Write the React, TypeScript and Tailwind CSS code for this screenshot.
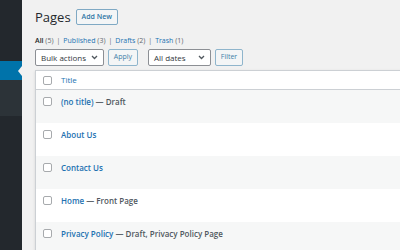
import { ReactNode } from "react";

const rows: { title: string; state?: string }[] = [
  { title: "(no title)", state: "Draft" },
  { title: "About Us" },
  { title: "Contact Us" },
  { title: "Home", state: "Front Page" },
  { title: "Privacy Policy", state: "Draft, Privacy Policy Page" },
];

function Checkbox() {
  return <span className="block w-[9px] h-[9px] rounded-[2px] border border-[#a7aaad] bg-white shrink-0" />;
}

function Chevron() {
  return (
    <svg width="7" height="5" viewBox="0 0 7 5" className="shrink-0">
      <path d="M1 1l2.5 2.5L6 1" fill="none" stroke="#50575e" strokeWidth="1.3" />
    </svg>
  );
}

function Select({ label, width }: { label: string; width: string }) {
  return (
    <div className={"flex items-center justify-between h-[17px] px-[5px] rounded-[2px] border border-[#8c8f94] bg-white text-[8px] text-[#32373c] " + width}>
      <span>{label}</span>
      <Chevron />
    </div>
  );
}

function Button({ children, width }: { children: ReactNode; width: string }) {
  return (
    <div className={"flex items-center justify-center h-[17px] rounded-[2px] border border-[#8fb5cc] bg-[#f3f5f6] text-[7px] text-[#3f7fa8] " + width}>
      {children}
    </div>
  );
}

export default function App() {
  return (
    <div className="flex w-[400px] h-[250px] overflow-hidden bg-[#f1f1f1]" style={{ fontFamily: '"Open Sans", "Noto Sans", sans-serif' }}>
      <aside className="flex flex-col w-[22px] shrink-0 bg-[#23282d]">
        <div className="h-[61px]" />
        <div className="relative h-[19px] bg-[#0073aa]">
          <span className="absolute right-0 top-[5px] w-0 h-0 border-y-[5px] border-y-transparent border-r-[4px] border-r-[#f1f1f1]" />
        </div>
        <div className="h-[36px] bg-[#2c3338]" />
      </aside>
      <main className="flex-1 pl-[13px] pt-[9px] min-w-0">
        <div className="flex items-center gap-[5px] h-[16px]">
          <h1 className="text-[13px] leading-none text-[#23282d]">Pages</h1>
          <div className="flex items-center h-[16px] px-[5px] rounded-[2px] border border-[#7fa9c4] bg-[#f3f5f6] text-[7px] font-semibold text-[#2e76a5]">
            Add New
          </div>
        </div>
        <div className="mt-[11px] h-[10px] flex items-center gap-[3px] text-[7px] text-[#646970] whitespace-nowrap">
          <span><span className="font-semibold text-[#1d2327]">All</span> (5)</span>
          <span>|</span>
          <span><span className="text-[#2271b1]">Published</span> (3)</span>
          <span>|</span>
          <span><span className="text-[#2271b1]">Drafts</span> (2)</span>
          <span>|</span>
          <span><span className="text-[#2271b1]">Trash</span> (1)</span>
        </div>
        <div className="mt-[3px] flex items-center">
          <Select label="Bulk actions" width="w-[69px]" />
          <div className="ml-[4px]"><Button width="w-[30px]">Apply</Button></div>
          <div className="ml-[10px]"><Select label="All dates" width="w-[63px]" /></div>
          <div className="ml-[4px]"><Button width="w-[28px]">Filter</Button></div>
        </div>
        <div className="mt-[4px] w-[400px] border border-[#ccd0d4] bg-white shadow-sm">
          <div className="flex items-center gap-[9px] h-[19px] pl-[7px] border-b border-[#ccd0d4]">
            <Checkbox />
            <span className="text-[8px] text-[#2271b1]">Title</span>
          </div>
          {rows.map((r, i) => (
            <div key={r.title} className={"flex items-start gap-[9px] h-[33px] pl-[7px] pt-[7px] " + (i % 2 === 0 ? "bg-[#f6f7f7]" : "bg-white")}>
              <Checkbox />
              <span className="text-[8px] leading-[9px] whitespace-nowrap">
                <span className="font-semibold text-[#2271b1]">{r.title}</span>
                {r.state && <span className="font-semibold text-[#50575e]"> — {r.state}</span>}
              </span>
            </div>
          ))}
        </div>
      </main>
    </div>
  );
}
